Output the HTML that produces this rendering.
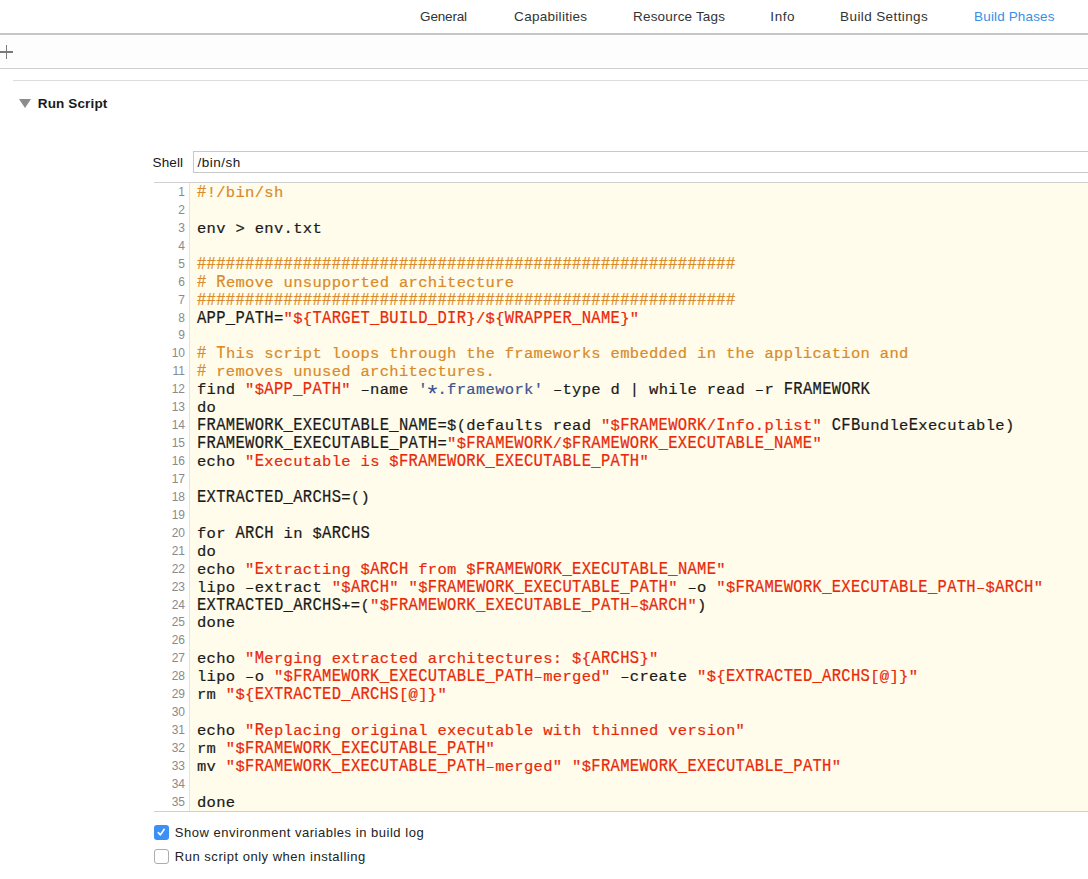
<!DOCTYPE html>
<html><head><meta charset="utf-8">
<style>
*{margin:0;padding:0;box-sizing:border-box}
html,body{width:1088px;height:879px;overflow:hidden;background:#fff;position:relative;font-family:"Liberation Sans",sans-serif}
.abs{position:absolute}
.tab{position:absolute;top:6.8px;font-size:13.5px;color:#333;white-space:nowrap;line-height:20px}
.tab.sel{color:#3a8ee6}
.hl{position:absolute;left:0;width:1088px}
#code{position:absolute;left:154px;top:183px;width:934px;height:628px;}
#gut{position:absolute;left:0;top:0;width:36px;height:628px;background:#fff}
#gutline{position:absolute;left:35px;top:0;width:1px;height:628px;background:#e8e4d0}
#ed{position:absolute;left:36px;top:0;width:898px;height:628px;background:#fffceb}
.ln{position:absolute;left:0;width:36px;text-align:right;padding-right:5px;font-size:12px;color:#8a8a8a;line-height:14px}
.cl{position:absolute;left:43px;font-family:"Liberation Mono",monospace;font-size:15.5px;letter-spacing:0.315px;color:#1a1a1a;white-space:pre;line-height:18px;-webkit-text-stroke:0.2px currentColor}
.u{display:inline-block;transform:scaleY(1.14);transform-origin:0 13.1px}
.st{display:inline-block;transform:translateY(4.2px) scale(1.6);transform-origin:50% 4.2px;-webkit-text-stroke:0}
.c{color:#d98a2a}
.s{color:#e8290b}
.b{color:#3c5590}
.cb{position:absolute;left:154px;width:15px;height:14.5px;border-radius:3px}
.cbl{position:absolute;left:174.8px;font-size:13px;color:#222;white-space:nowrap;line-height:20px;letter-spacing:0.52px}
</style></head><body>
<div class="tab" style="left:420.1px;letter-spacing:-0.18px">General</div>
<div class="tab" style="left:514.1px;letter-spacing:0.29px">Capabilities</div>
<div class="tab" style="left:633.1px;letter-spacing:0.17px">Resource Tags</div>
<div class="tab" style="left:770.3px;letter-spacing:0.6px">Info</div>
<div class="tab" style="left:840.1px;letter-spacing:0.39px">Build Settings</div>
<div class="tab sel" style="left:974.1px;letter-spacing:0.14px">Build Phases</div>
<div class="hl" style="top:33px;height:2px;background:#c6c6c6"></div>
<div class="hl" style="top:35px;height:33px;background:#fdfdfd"></div>
<div class="abs" style="left:0;top:51px;width:13px;height:2px;background:#7a7a7a"></div>
<div class="abs" style="left:6px;top:45px;width:1px;height:14px;background:#7a7a7a"></div>
<div class="hl" style="top:68px;height:1px;background:#d0d0d0"></div>
<div class="abs" style="left:13px;top:80px;width:1075px;height:1px;background:#dcdcdc"></div>
<div class="abs" style="left:19px;top:99px;width:0;height:0;border-left:6px solid transparent;border-right:6px solid transparent;border-top:9.8px solid #8c8c8c"></div>
<div class="abs" style="left:37.75px;top:94px;font-size:13.5px;font-weight:bold;color:#1a1a1a;line-height:20px;letter-spacing:0.14px">Run Script</div>
<div class="abs" style="left:152.5px;top:152.5px;font-size:13.5px;color:#161616;line-height:20px;letter-spacing:0.13px">Shell</div>
<div class="abs" style="left:193px;top:151px;width:900px;height:22px;border:1px solid #c8c8c8;background:#fff"></div>
<div class="abs" style="left:197.5px;top:152.5px;font-size:13.5px;color:#161616;line-height:20px;letter-spacing:0.48px">/bin/sh</div>
<div class="abs" style="left:154px;top:182px;width:934px;height:1px;background:#d0d0d0"></div>
<div id="code">
<div id="gut"></div><div id="ed"></div><div id="gutline"></div>
<div class="ln" style="top:2.00px">1</div>
<div class="cl" style="top:1.00px"><span class="c"><span class="u">#</span>!/bin/sh</span></div>
<div class="ln" style="top:19.93px">2</div>
<div class="ln" style="top:37.87px">3</div>
<div class="cl" style="top:36.87px">env &gt; env.txt</div>
<div class="ln" style="top:55.80px">4</div>
<div class="ln" style="top:73.74px">5</div>
<div class="cl" style="top:72.74px"><span class="c"><span class="u">########################################################</span></span></div>
<div class="ln" style="top:91.67px">6</div>
<div class="cl" style="top:90.67px"><span class="c"><span class="u">#</span> <span class="u">R</span>emove unsupported architecture</span></div>
<div class="ln" style="top:109.61px">7</div>
<div class="cl" style="top:108.61px"><span class="c"><span class="u">########################################################</span></span></div>
<div class="ln" style="top:127.54px">8</div>
<div class="cl" style="top:126.54px"><span class="u">APP_PATH</span>=<span class="s">"${<span class="u">TARGET_BUILD_DIR</span>}/${<span class="u">WRAPPER_NAME</span>}"</span></div>
<div class="ln" style="top:145.48px">9</div>
<div class="ln" style="top:163.41px">10</div>
<div class="cl" style="top:162.41px"><span class="c"><span class="u">#</span> <span class="u">T</span>his script loops through the frameworks embedded in the application and</span></div>
<div class="ln" style="top:181.35px">11</div>
<div class="cl" style="top:180.35px"><span class="c"><span class="u">#</span> removes unused architectures.</span></div>
<div class="ln" style="top:199.28px">12</div>
<div class="cl" style="top:198.28px">find <span class="s">"$<span class="u">APP_PATH</span>"</span> –name <span class="b">'<span class="st">*</span>.framework'</span> –type d | while read –r <span class="u">FRAMEWORK</span></div>
<div class="ln" style="top:217.22px">13</div>
<div class="cl" style="top:216.22px">do</div>
<div class="ln" style="top:235.15px">14</div>
<div class="cl" style="top:234.15px"><span class="u">FRAMEWORK_EXECUTABLE_NAME</span>=$(defaults read <span class="s">"$<span class="u">FRAMEWORK</span>/<span class="u">I</span>nfo.plist"</span> <span class="u">CFB</span>undle<span class="u">E</span>xecutable)</div>
<div class="ln" style="top:253.09px">15</div>
<div class="cl" style="top:252.09px"><span class="u">FRAMEWORK_EXECUTABLE_PATH</span>=<span class="s">"$<span class="u">FRAMEWORK</span>/$<span class="u">FRAMEWORK_EXECUTABLE_NAME</span>"</span></div>
<div class="ln" style="top:271.02px">16</div>
<div class="cl" style="top:270.02px">echo <span class="s">"<span class="u">E</span>xecutable is $<span class="u">FRAMEWORK_EXECUTABLE_PATH</span>"</span></div>
<div class="ln" style="top:288.96px">17</div>
<div class="ln" style="top:306.89px">18</div>
<div class="cl" style="top:305.89px"><span class="u">EXTRACTED_ARCHS</span>=()</div>
<div class="ln" style="top:324.83px">19</div>
<div class="ln" style="top:342.76px">20</div>
<div class="cl" style="top:341.76px">for <span class="u">ARCH</span> in $<span class="u">ARCHS</span></div>
<div class="ln" style="top:360.70px">21</div>
<div class="cl" style="top:359.70px">do</div>
<div class="ln" style="top:378.63px">22</div>
<div class="cl" style="top:377.63px">echo <span class="s">"<span class="u">E</span>xtracting $<span class="u">ARCH</span> from $<span class="u">FRAMEWORK_EXECUTABLE_NAME</span>"</span></div>
<div class="ln" style="top:396.57px">23</div>
<div class="cl" style="top:395.57px">lipo –extract <span class="s">"$<span class="u">ARCH</span>"</span> <span class="s">"$<span class="u">FRAMEWORK_EXECUTABLE_PATH</span>"</span> –o <span class="s">"$<span class="u">FRAMEWORK_EXECUTABLE_PATH</span>–$<span class="u">ARCH</span>"</span></div>
<div class="ln" style="top:414.50px">24</div>
<div class="cl" style="top:413.50px"><span class="u">EXTRACTED_ARCHS</span>+=(<span class="s">"$<span class="u">FRAMEWORK_EXECUTABLE_PATH</span>–$<span class="u">ARCH</span>"</span>)</div>
<div class="ln" style="top:432.44px">25</div>
<div class="cl" style="top:431.44px">done</div>
<div class="ln" style="top:450.37px">26</div>
<div class="ln" style="top:468.31px">27</div>
<div class="cl" style="top:467.31px">echo <span class="s">"<span class="u">M</span>erging extracted architectures: ${<span class="u">ARCHS</span>}"</span></div>
<div class="ln" style="top:486.24px">28</div>
<div class="cl" style="top:485.24px">lipo –o <span class="s">"$<span class="u">FRAMEWORK_EXECUTABLE_PATH</span>–merged"</span> –create <span class="s">"${<span class="u">EXTRACTED_ARCHS</span>[@]}"</span></div>
<div class="ln" style="top:504.18px">29</div>
<div class="cl" style="top:503.18px">rm <span class="s">"${<span class="u">EXTRACTED_ARCHS</span>[@]}"</span></div>
<div class="ln" style="top:522.12px">30</div>
<div class="ln" style="top:540.05px">31</div>
<div class="cl" style="top:539.05px">echo <span class="s">"<span class="u">R</span>eplacing original executable with thinned version"</span></div>
<div class="ln" style="top:557.99px">32</div>
<div class="cl" style="top:556.99px">rm <span class="s">"$<span class="u">FRAMEWORK_EXECUTABLE_PATH</span>"</span></div>
<div class="ln" style="top:575.92px">33</div>
<div class="cl" style="top:574.92px">mv <span class="s">"$<span class="u">FRAMEWORK_EXECUTABLE_PATH</span>–merged"</span> <span class="s">"$<span class="u">FRAMEWORK_EXECUTABLE_PATH</span>"</span></div>
<div class="ln" style="top:593.85px">34</div>
<div class="ln" style="top:611.79px">35</div>
<div class="cl" style="top:610.79px">done</div>
</div>
<div class="abs" style="left:154px;top:811px;width:934px;height:1px;background:#d0d0d0"></div>
<div class="cb" style="top:825px;background:#3b8ff5"><svg width="14" height="14" viewBox="0 0 14 14" style="position:absolute;left:0;top:0"><path d="M4.3 7.6 L6.4 9.9 L10.2 4.3" stroke="#fff" stroke-width="1.6" fill="none" stroke-linecap="round" stroke-linejoin="round"/></svg></div>
<div class="cbl" style="top:822.6px">Show environment variables in build log</div>
<div class="cb" style="top:849px;border:1px solid #adadad;background:#fff"></div>
<div class="cbl" style="top:846.9px">Run script only when installing</div>
</body></html>
